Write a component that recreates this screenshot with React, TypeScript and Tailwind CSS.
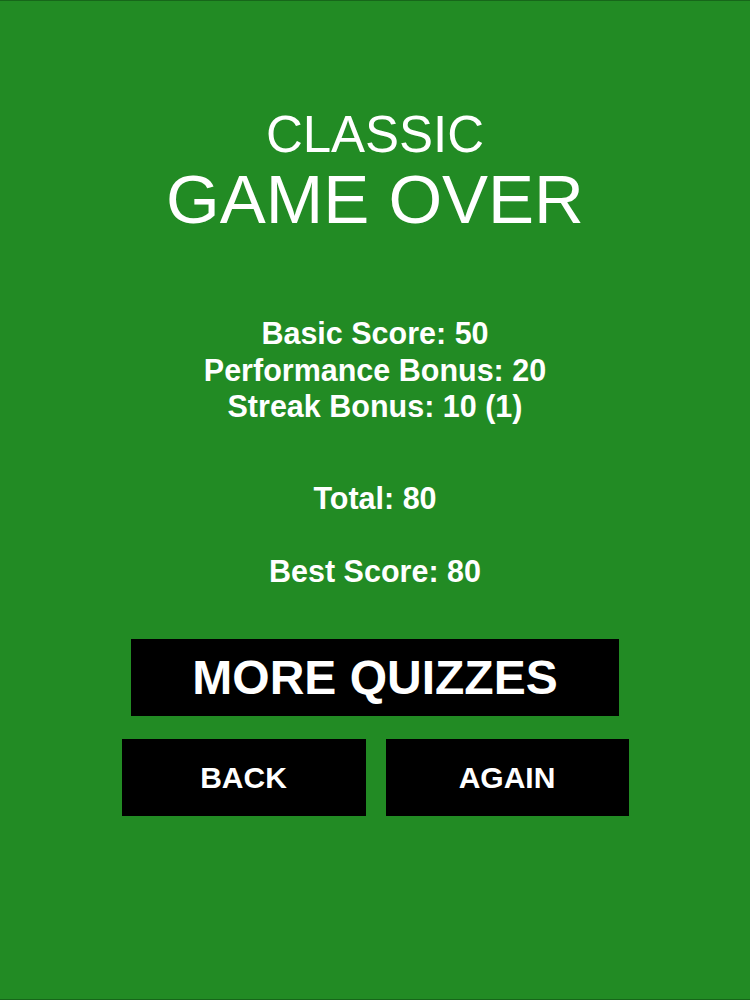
export default function App() {
  const scoreLines = [
    "Basic Score: 50",
    "Performance Bonus: 20",
    "Streak Bonus: 10 (1)",
  ];

  return (
    <div
      className="flex h-[1000px] w-[750px] flex-col items-center border-y border-[#17661a] bg-[#228b24] text-white"
      style={{ fontFamily: '"Liberation Sans", Arial, sans-serif' }}
    >
      {/* title */}
      <div className="mt-[106px] text-[51px] leading-[56px]">CLASSIC</div>
      <div className="mt-[1px] text-[69px] leading-[72px]">GAME OVER</div>

      {/* score breakdown */}
      <div className="mt-[79px] flex flex-col items-center text-[30.5px] font-bold leading-[36.5px]">
        {scoreLines.map((line) => (
          <div key={line}>{line}</div>
        ))}
      </div>
      <div className="mt-[55px] text-[30.5px] font-bold leading-[36.5px]">Total: 80</div>
      <div className="mt-[36.5px] text-[30.5px] font-bold leading-[36.5px]">Best Score: 80</div>

      {/* actions */}
      <button
        type="button"
        className="mt-[50px] flex h-[77px] w-[488px] items-center justify-center bg-black text-[48px] font-bold leading-none text-white"
      >
        MORE QUIZZES
      </button>
      <div className="mt-[23px] flex gap-[20px]">
        <button
          type="button"
          className="flex h-[77px] w-[244px] items-center justify-center bg-black text-[30px] font-bold text-white"
        >
          BACK
        </button>
        <button
          type="button"
          className="flex h-[77px] w-[243px] items-center justify-center bg-black text-[30px] font-bold text-white"
        >
          AGAIN
        </button>
      </div>
    </div>
  );
}
